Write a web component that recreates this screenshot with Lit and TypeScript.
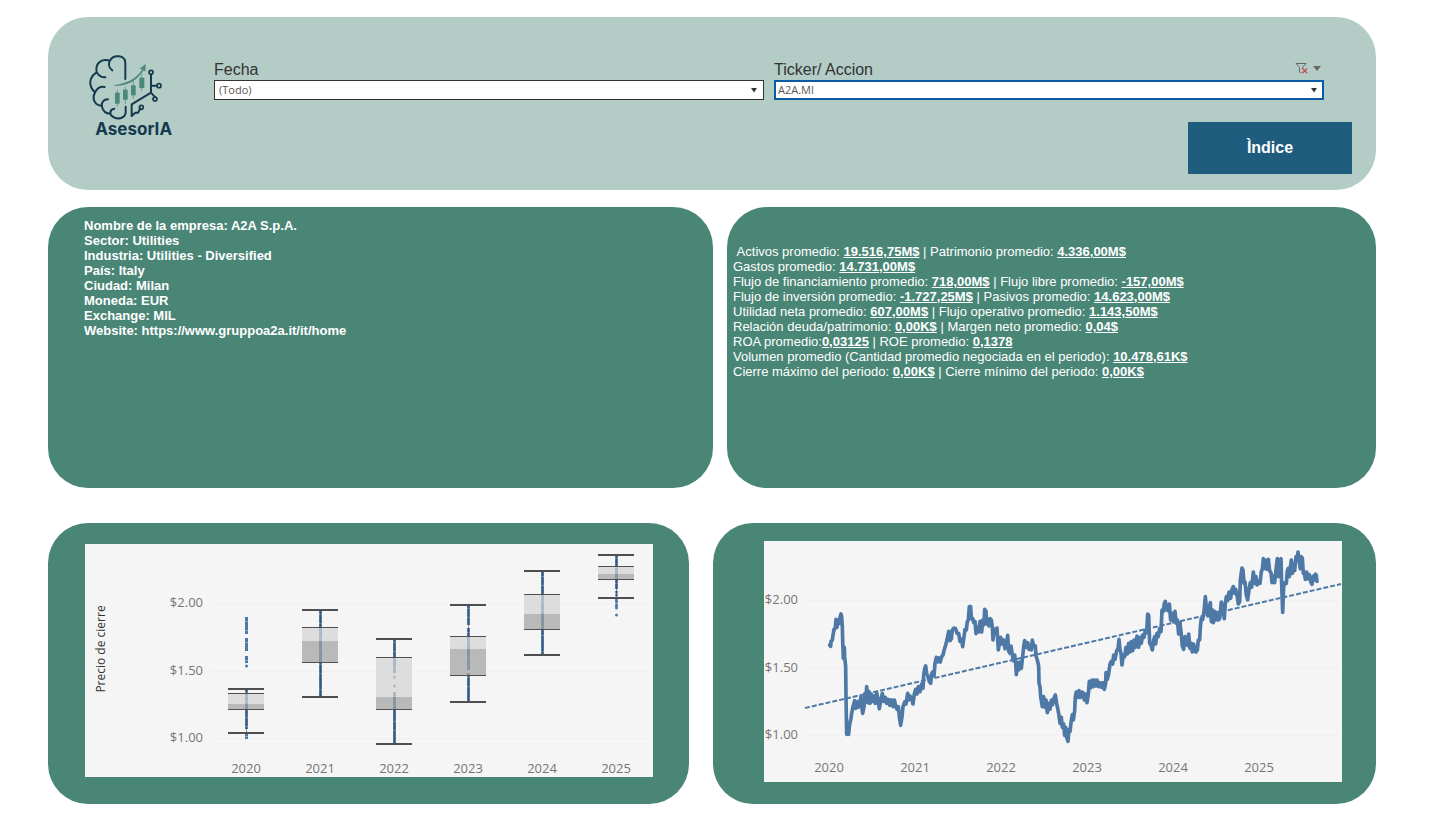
import { LitElement, html, css, svg } from "lit";
import { customElement } from "lit/decorators.js";

type Box = { year: string; x: number; high: number; q3: number; mid: number; q1: number; low: number; dots: number[][]; sparse: number[] };

// Box plot geometry, in chart pixels; dots are [from, to] runs of daily closes.
const BOXES: Box[] = [
  { year: "2020", x: 161, high: 145, q3: 149, mid: 160, q1: 166, low: 189, dots: [[73, 90], [94, 107], [112, 119], [144, 185], [188, 195]], sparse: [122] },
  { year: "2021", x: 235, high: 66, q3: 83, mid: 97, q1: 119, low: 153, dots: [[66, 152]], sparse: [] },
  { year: "2022", x: 309, high: 95, q3: 113, mid: 153, q1: 166, low: 200, dots: [[94, 129], [148, 201]], sparse: [133, 142] },
  { year: "2023", x: 383, high: 61, q3: 92, mid: 105, q1: 132, low: 158, dots: [[60, 81], [84, 126], [129, 159]], sparse: [] },
  { year: "2024", x: 457, high: 27, q3: 50, mid: 70, q1: 86, low: 111, dots: [[28, 111]], sparse: [] },
  { year: "2025", x: 531, high: 11, q3: 22, mid: 30, q1: 36, low: 54, dots: [[10, 45]], sparse: [48, 51, 56, 58, 61, 62, 64, 71] },
];

// Closing price trace, three units to one chart pixel.
const TRACE: { dx: number; points: string }[] = [
  {
    dx: -12,
    points:
      "209,315 212,319 213,304 217,300 219,286 222,268 226,265 228,238 231,262 234,240 238,250 240,232 243,222 245,230 247,262 248,300 250,355 253,322 254,350 257,380 258,470 260,583 264,560 266,583 268,560 270,548 273,535 275,520 279,500 284,482 287,505 291,485 295,502 299,488 303,470 305,500 308,520 312,500 315,460 318,478 320,440 323,488 327,455 330,490 334,462 338,484 342,468 346,490 350,458 354,480 358,506 362,482 367,460 371,484 376,472 380,490 385,478 389,496 394,480 399,500 403,480 407,498 411,508 415,500 418,530 422,556 426,530 429,500 434,486 438,492 443,460 446,480 450,468 454,474 459,492 463,462 467,448 471,462 475,440 480,455 485,432 489,445 491,405 494,386 497,378 500,400 504,410 508,425 512,430 515,400 519,395 522,408 525,370 529,352 533,366 537,354 541,366 545,350 549,345 553,328 557,315 561,300 566,274 570,302 574,296 577,270 582,264 587,266 591,280 596,280 600,304",
  },
  {
    dx: 558,
    points:
      "31,296 35,298 38,320 42,290 45,268 49,270 52,245 55,240 58,200 62,200 64,236 68,235 71,248 75,244 78,281 82,262 86,276 90,244 95,276 98,240 102,254 104,208 108,214 110,252 114,238 117,258 120,236 124,240 127,262 129,300 133,268 137,280 141,264 145,330 149,305 152,292 156,312 160,300 165,326 169,310 173,286 176,334 180,340 183,318 187,345 190,362 194,345 197,370 199,404 203,368 206,390 210,366 214,385 218,350 221,320 224,302 229,322 233,308 237,328 241,316 244,330 247,300 251,320 256,318 258,348 262,360 266,378 267,430 270,440 272,470 277,500 281,470 285,502 288,480 292,518 296,490 300,508 304,480 308,494 312,474 316,465 320,490 322,500 326,520 330,550 334,532 337,562 341,552 344,586 347,562 350,592 354,604 357,568 360,575 364,540 367,524 370,540 374,512 376,470 379,456 383,472 387,452 391,472 395,456 399,458 403,480 407,462 411,488 415,462 418,424 422,444 426,420 430,440 434,420 438,438 441,420 446,440 450,428 455,442 459,428 463,448 467,430 468,398 472,418 476,402 480,372 484,364 488,372 491,345 495,358 500,332 504,328 507,298 510,328 513,340 516,375 520,345 524,350 528,322 532,342 536,310 540,336 544,305 548,332 552,300 556,322 561,288 566,322 570,292 574,310 578,285 582,292 586,270 590,278 593,222 596,226 599,310",
  },
  {
    dx: 1143,
    points:
      "18,316 22,330 26,300 29,290 32,312 36,280 40,290 44,266 48,275 51,210 55,214 58,190 61,184 65,210 69,212 73,192 77,240 81,220 85,245 90,214 94,250 97,240 101,282 105,248 109,285 112,318 116,328 120,290 124,312 128,316 131,282 135,325 139,310 142,336 146,312 150,334 153,336 157,330 160,300 164,300 166,262 169,235 173,238 177,215 181,170 185,210 189,228 193,200 196,188 199,245 203,210 205,248 210,215 213,240 217,218 220,240 224,236 229,186 233,205 238,236 241,190 244,170 248,182 252,156 257,175 261,148 265,140 269,160 272,148 276,165 280,192 284,185 286,120 291,84 294,90 297,130 300,126 304,165 308,180 312,150 316,128 320,142 325,96 330,130 333,110 336,135 341,125 345,130 349,95 352,88 355,56 359,85 363,60 366,88 370,58 374,92 378,98 381,128 386,108 389,128 393,90 397,56 401,110 404,62 408,56 410,130 413,217 416,140 420,128 424,130 427,92 430,85 433,110 436,82 439,60 442,100 445,74 449,92 453,50 456,60 459,36 462,60 466,86 468,50 472,54 475,100 478,96 481,118 485,96 489,116 493,104 497,125 501,133 505,108 508,120 511,102 514,106 516,124",
  },
];

const tracePoints = TRACE.map(({ dx, points }) =>
  points
    .split(" ")
    .map((pair) => {
      const [x, y] = pair.split(",").map(Number);
      return `${x + dx},${y - 3}`;
    })
    .join(" ")
).join(" ");

const METRICS: string[][][] = [
  [["\u00a0Activos promedio: ", "19.516,75M$"], [" | Patrimonio promedio: ", "4.336,00M$"]],
  [["Gastos promedio: ", "14.731,00M$"]],
  [["Flujo de financiamiento promedio: ", "718,00M$"], [" | Flujo libre promedio: ", "-157,00M$"]],
  [["Flujo de inversión promedio: ", "-1.727,25M$"], [" | Pasivos promedio: ", "14.623,00M$"]],
  [["Utilidad neta promedio: ", "607,00M$"], [" | Flujo operativo promedio: ", "1.143,50M$"]],
  [["Relación deuda/patrimonio: ", "0,00K$"], [" | Margen neto promedio: ", "0,04$"]],
  [["ROA promedio:", "0,03125"], [" | ROE promedio: ", "0,1378"]],
  [["Volumen promedio (Cantidad promedio negociada en el periodo): ", "10.478,61K$"]],
  [["Cierre máximo del periodo: ", "0,00K$"], [" | Cierre mínimo del periodo: ", "0,00K$"]],
];

const COMPANY = [
  "Nombre de la empresa: A2A S.p.A.",
  "Sector: Utilities",
  "Industria: Utilities - Diversified",
  "País: Italy",
  "Ciudad: Milan",
  "Moneda: EUR",
  "Exchange: MIL",
  "Website: https://www.gruppoa2a.it/it/home",
];

@customElement("brand-logo")
export class BrandLogo extends LitElement {
  static styles = css`
    :host { display: block; }
    .mark { display: block; width: 100%; height: auto; }
    .ink { fill: none; stroke: #153a4e; stroke-width: 6; stroke-linecap: round; stroke-linejoin: round; }
    .thin { stroke-width: 5; }
    .leaf { fill: #4a8878; }
    .wick { stroke: #4a8878; stroke-width: 2; }
    .name { font: 700 51px Inter, "Liberation Sans", sans-serif; fill: #153a4e; }
  `;
  render() {
    return html`<svg class="mark" viewBox="0 0 300 300" role="img" aria-label="AsesorIA">
      <path class="ink" d="M136 102V54C136 30 100 26 89 48C84 60 89 71 97 76M85 46C62 40 45 58 50 81C54 91 66 98 76 97M49 83C25 98 26 125 45 142M74 126C60 123 48 132 45 143C35 160 44 183 66 182M84 163C71 163 63 172 66 185C68 200 80 207 91 205M103 191C90 193 86 207 98 215C114 226 136 219 137 202V185" />
      <path class="ink" d="M213 88V143L155 178V212M213 122H231M213 143L226 157M155 213L166 203H174L181 190" />
      <g class="ink thin"><circle cx="213" cy="82" r="6" /><circle cx="237" cy="122" r="6" /><circle cx="225" cy="162" r="6" /><circle cx="184" cy="187" r="6" /></g>
      <path class="leaf" d="M103 120C144 116 172 98 187 73L178 72L197 57L196 80L191 76C172 106 142 125 103 122Z" />
      <path class="wick" d="M112 135V185M136 124V177M160 107V162M185 86V138" />
      <g class="leaf"><rect x="105" y="143" width="14" height="33" /><rect x="129" y="134" width="14" height="30" /><rect x="153" y="121" width="14" height="30" /><rect x="178" y="98" width="15" height="31" /></g>
      <text class="name" x="46" y="269">AsesorIA</text>
    </svg>`;
  }
}

@customElement("box-chart")
export class BoxChart extends LitElement {
  static styles = css`
    :host { display: block; }
    .chart { display: block; width: 100%; height: auto; background: #f5f5f5; }
    .tick { font: 400 13px "Open Sans", "Noto Sans", sans-serif; fill: #757575; }
    .title { font: 400 12px "Open Sans", "Noto Sans", sans-serif; fill: #333; }
    .mid { text-anchor: middle; }
    .end { text-anchor: end; }
    .grid { stroke: #f0f0f0; }
    .run { stroke: #4e79a7; stroke-width: 3; }
    .gap { stroke: #f5f5f5; stroke-opacity: 0.35; stroke-width: 3; stroke-dasharray: 1 8 1 15; }
    .dot { fill: #4e79a7; }
    .upper { fill: #d3d3d3; fill-opacity: 0.7; }
    .lower { fill: #a0a0a0; fill-opacity: 0.7; }
    .edge { stroke: #4f4f52; stroke-width: 1; }
    .cap { stroke: #4f4f52; stroke-width: 2; }
    .stem { stroke: #333844; stroke-opacity: 0.55; stroke-width: 1; }
  `;
  render() {
    return html`<svg class="chart" viewBox="0 0 568 233" role="img" aria-label="Precio de cierre">
      ${[[60, "$2.00"], [128, "$1.50"], [195, "$1.00"]].map(
        ([y, label]) => svg`<path class="grid" d="M124 ${Number(y) - 0.5}H568" /><text class="tick end" x="118" y=${Number(y) + 3}>${label}</text>`
      )}
      <text class="title mid" transform="translate(20 105) rotate(-90)">Precio de cierre</text>
      ${BOXES.map(
        (b) => svg`
        ${b.dots.map(([a, z]) => svg`<path class="run" d="M${b.x + 0.5} ${a}V${z}" /><path class="gap" d="M${b.x + 0.5} ${a + 4}V${z}" />`)}
        ${b.sparse.map((y) => svg`<circle class="dot" cx=${b.x + 0.5} cy=${y} r="1.5" />`)}
        <path class="stem" d="M${b.x + 0.5} ${b.high}V${b.q3}M${b.x + 0.5} ${b.q1}V${b.low}" />
        <rect class="upper" x=${b.x - 18} y=${b.q3} width="36" height=${b.mid - b.q3} />
        <rect class="lower" x=${b.x - 18} y=${b.mid} width="36" height=${b.q1 - b.mid} />
        <path class="edge" d="M${b.x - 18} ${b.q3 + 0.5}h36M${b.x - 18} ${b.q1 - 0.5}h36" />
        <path class="cap" d="M${b.x - 18} ${b.high}h36M${b.x - 18} ${b.low}h36" />
        <text class="tick mid" x=${b.x} y="229">${b.year}</text>`
      )}
    </svg>`;
  }
}

@customElement("trend-chart")
export class TrendChart extends LitElement {
  static styles = css`
    :host { display: block; }
    .chart { display: block; width: 100%; height: auto; background: #f5f5f5; }
    .tick { font: 400 13px "Open Sans", "Noto Sans", sans-serif; fill: #757575; }
    .mid { text-anchor: middle; }
    .end { text-anchor: end; }
    .grid { stroke: #f0f0f0; }
    .line { fill: none; stroke: #4e79a7; stroke-width: 11; stroke-linejoin: round; stroke-linecap: round; }
    .trend { fill: none; stroke: #4e79a7; stroke-width: 2; stroke-dasharray: 5 2; }
  `;
  render() {
    return html`<svg class="chart" viewBox="0 0 578 241" role="img" aria-label="Precio de cierre por fecha">
      ${[[60, "$2.00"], [128, "$1.50"], [195, "$1.00"]].map(
        ([y, label]) => svg`<path class="grid" d="M41 ${Number(y) - 0.5}H578" /><text class="tick end" x="34" y=${Number(y) + 3}>${label}</text>`
      )}
      ${["2020", "2021", "2022", "2023", "2024", "2025"].map(
        (year, i) => svg`<text class="tick mid" x=${65 + i * 86} y="231">${year}</text>`
      )}
      <path class="trend" d="M41 167L577 43" />
      <g transform="scale(0.33333)"><polyline class="line" points=${tracePoints} /></g>
    </svg>`;
  }
}

@customElement("app-root")
export class AppRoot extends LitElement {
  static styles = css`
    :host { display: block; font-family: "Liberation Sans", Arial, sans-serif; background: #fff; }
    * { box-sizing: border-box; }
    .page { display: flex; flex-direction: column; padding: 17px 71px 31px 48px; }
    .panel { border-radius: 40px; background: #4a8676; color: #fff; }
    .header { display: flex; align-items: stretch; gap: 34px; min-height: 173px; padding: 28px 24px 16px 32px; background: #b3ccc6; }
    .logo { flex: none; width: 100px; }
    .controls { flex: 1; display: flex; flex-direction: column; justify-content: space-between; }
    .filters { display: grid; grid-template-columns: 1fr 1fr; gap: 10px; padding: 14px 28px 0 0; }
    .filter { display: flex; flex-direction: column; }
    .caption { display: flex; align-items: center; justify-content: space-between; height: 21px; color: #333; font-size: 16px; line-height: 21px; }
    .tools { display: flex; align-items: center; gap: 4px; padding: 0 3px 3px 0; }
    .icon { display: block; }
    .select { position: relative; display: block; }
    .box { display: block; width: 100%; height: 20px; padding: 0 16px 1px 4px; border: 1px solid #333; border-radius: 0; appearance: none; outline: none; background: #fff; color: #555; font: 400 11px "Open Sans", "Noto Sans", sans-serif; }
    .active { border: 2px solid #0b5aa5; padding-left: 2px; }
    .arrow { position: absolute; right: 6px; top: 8px; pointer-events: none; }
    .index { align-self: flex-end; width: 164px; height: 52px; padding: 0; border: 0; border-radius: 0; background: #1f5c7e; color: #fff; font: bold 16px "Liberation Sans", Arial, sans-serif; }
    .details { display: grid; grid-template-columns: 665fr 649fr; gap: 14px; padding-top: 17px; }
    .info { min-height: 281px; font-size: 13px; line-height: 15px; }
    .company { padding: 11px 36px; font-weight: bold; }
    .metrics { padding: 37px 6px; }
    .row { margin: 0; }
    .value { font-weight: bold; text-decoration: underline; }
    .charts { display: grid; grid-template-columns: 641fr 663fr; gap: 24px; padding-top: 35px; }
    .boxes { padding: 21px 36px 27px 37px; }
    .trend { padding: 18px 34px 22px 51px; }
  `;

  private arrow(cls: string, fill: string) {
    return html`<svg class="icon ${cls}" width="8" height="5" viewBox="0 0 8 5" aria-hidden="true"><path d=${cls ? "M1 0H7L4 4.500Z" : "M0 0H8L4 5Z"} fill=${fill} /></svg>`;
  }

  render() {
    return html`<main class="page">
      <header class="panel header">
        <brand-logo class="logo"></brand-logo>
        <div class="controls">
          <div class="filters">
            <div class="filter">
              <label class="caption" for="fecha">Fecha</label>
              <div class="select">
                <select class="box" id="fecha"><option>(Todo)</option></select>
                ${this.arrow("arrow", "#333")}
              </div>
            </div>
            <div class="filter">
              <div class="caption">
                <label for="ticker">Ticker/ Accion</label>
                <span class="tools">
                  <svg class="icon" width="14" height="12" viewBox="0 0 14 12" aria-hidden="true">
                    <path d="M1 1.500H11L7.500 5.500V7M1 1.500L4.500 5.500V10L6.500 11" fill="none" stroke="#666" />
                    <path d="M7.500 6.500L12 11M12 6.500L7.500 11" fill="none" stroke="#c8474b" stroke-width="1.200" />
                  </svg>
                  ${this.arrow("", "#666")}
                </span>
              </div>
              <div class="select">
                <select class="box active" id="ticker"><option>A2A.MI</option></select>
                ${this.arrow("arrow", "#333")}
              </div>
            </div>
          </div>
          <button class="index" type="button">Ìndice</button>
        </div>
      </header>
      <div class="details">
        <section class="panel info company">${COMPANY.map((line) => html`<p class="row">${line}</p>`)}</section>
        <section class="panel info metrics">
          ${METRICS.map((row) => html`<p class="row">${row.map(([label, value]) => html`${label}<span class="value">${value}</span>`)}</p>`)}
        </section>
      </div>
      <div class="charts">
        <section class="panel boxes"><box-chart></box-chart></section>
        <section class="panel trend"><trend-chart></trend-chart></section>
      </div>
    </main>`;
  }
}
